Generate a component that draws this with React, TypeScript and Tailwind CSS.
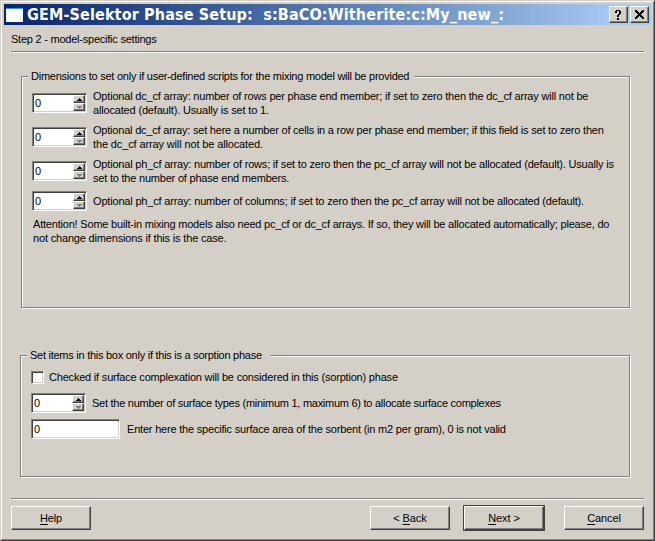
import type { ReactNode } from "react";

type Line = { text: string; tracking?: string };

function TextLines({ lines }: { lines: Line[] }) {
  return (
    <div className="flex flex-col items-start">
      {lines.map((l) => (
        <span key={l.text} className={`block h-[14px] whitespace-pre ${l.tracking ?? ""}`}>
          {l.text}
        </span>
      ))}
    </div>
  );
}

const sunken =
  "border border-t-[#808080] border-l-[#808080] border-r-white border-b-white bg-white shadow-[inset_1px_1px_0_#404040,inset_-1px_-1px_0_#d4d0c8]";
const raised =
  "border border-t-white border-l-white border-r-[#404040] border-b-[#404040] bg-[#d4d0c8] shadow-[inset_-1px_-1px_0_#808080]";

function SpinButton({ down }: { down?: boolean }) {
  return (
    <span className={`flex h-2 w-3 items-center justify-center ${raised}`}>
      <svg width="5" height="3" viewBox="0 0 5 3" shapeRendering="crispEdges" className={down ? "fill-[#808080]" : "fill-black"}>
        <path d={down ? "M0 0h5v1H0zM1 1h3v1H1zM2 2h1v1H2z" : "M2 0h1v1H2zM1 1h3v1H1zM0 2h5v1H0z"} />
      </svg>
    </span>
  );
}

function SpinBox() {
  return (
    <div className={`flex h-5 w-[55px] shrink-0 justify-between py-px pr-px pl-0.5 ${sunken}`}>
      <span className="h-4 leading-4">0</span>
      <div className="flex flex-col">
        <SpinButton />
        <SpinButton down />
      </div>
    </div>
  );
}

function Separator() {
  return <div className="mx-[9px] h-0.5 shrink-0 border-t border-[#808080] bg-white" />;
}

function Group({ title, titleClass, className, children }: { title: string; titleClass: string; className: string; children: ReactNode }) {
  return (
    <section
      className={`border border-[#808080] shadow-[1px_1px_0_#fff,inset_1px_1px_0_#fff] ${className}`}
    >
      <h2 className={`-mt-2 ml-1.5 h-[14px] bg-[#d4d0c8] pl-[3px] whitespace-pre ${titleClass}`}>{title}</h2>
      {children}
    </section>
  );
}

function Button({ hot, before, after, className }: { hot: string; before?: string; after: string; className?: string }) {
  return (
    <button className={`h-6 w-20 tracking-[-0.1px] whitespace-pre ${raised} ${className ?? ""}`}>
      {before}
      <span className="underline underline-offset-2">{hot}</span>
      {after}
    </button>
  );
}

const rows: Line[][] = [
  [
    { text: "Optional dc_cf array: number of rows per phase end member; if set to zero then the dc_cf array will not be", tracking: "tracking-[-0.19px]" },
    { text: "allocated (default). Usually is set to 1.", tracking: "tracking-[-0.17px]" },
  ],
  [
    { text: "Optional dc_cf array: set here a number of cells in a row per phase end member; if this field is set to zero then", tracking: "tracking-[-0.21px]" },
    { text: "the dc_cf array will not be allocated.", tracking: "tracking-[-0.13px]" },
  ],
  [
    { text: "Optional ph_cf array: number of rows; if set to zero then the pc_cf array will not be allocated (default). Usually is", tracking: "tracking-[-0.19px]" },
    { text: "set to the number of phase end members.", tracking: "tracking-[-0.21px]" },
  ],
  [{ text: "Optional ph_cf array: number of columns; if set to zero then the pc_cf array will not be allocated (default).", tracking: "tracking-[-0.18px]" }],
];

export default function App() {
  return (
    <div className="h-[541px] w-[655px] border border-t-[#d4d0c8] border-l-[#d4d0c8] border-r-[#404040] border-b-[#404040] bg-[#d4d0c8] font-['Liberation_Sans',Arial,sans-serif] text-[11px] leading-[14px] text-black">
      <div className="flex h-full flex-col border border-t-white border-l-white border-r-[#808080] border-b-[#808080]">
        <header className="mx-0.5 mt-0.5 flex h-[21px] shrink-0 items-center bg-linear-to-r from-[#0a246a] to-[#a6caf0] to-95% pr-0.5 pl-0.5">
          <span className="h-[14px] w-[17px] border-t border-[#3a95ff] bg-white" />
          <h1 className="ml-1 flex-1 font-['DejaVu_Sans_Condensed','DejaVu_Sans',sans-serif] text-[16px] leading-[21px] font-bold tracking-[0.14px] whitespace-pre text-white">
            GEM-Selektor Phase Setup:  s:BaCO:Witherite:c:My_new_:
          </h1>
          <button className={`flex h-[17px] w-[19px] items-center justify-center ${raised}`}>
            <svg width="7" height="10" viewBox="0 0 7 10" shapeRendering="crispEdges">
              <path d="M1 0h4v1H1zM0 1h2v2H0zM4 1h2v3H4zM3 4h2v1H3zM2 5h2v2H2zM2 8h2v2H2z" />
            </svg>
          </button>
          <button className={`ml-0.5 flex h-[17px] w-[19px] items-center justify-center ${raised}`}>
            <svg width="9" height="9" viewBox="0 0 9 9" shapeRendering="crispEdges">
              <path d="M0 0h2v1H0zM7 0h2v1H7zM0 1h3v1H0zM6 1h3v1H6zM1 2h3v1H1zM5 2h3v1H5zM2 3h5v1H2zM3 4h3v1H3zM2 5h5v1H2zM1 6h3v1H1zM5 6h3v1H5zM0 7h3v1H0zM6 7h3v1H6zM0 8h2v1H0zM7 8h2v1H7z" />
            </svg>
          </button>
        </header>
        <p className="mt-[7px] mb-[5px] ml-[9px] h-[14px] shrink-0 tracking-[-0.23px] whitespace-pre">Step 2 - model-specific settings</p>
        <Separator />
        <main className="flex min-h-0 flex-1 flex-col pt-[23px]">
          <Group
            className="ml-[19px] h-[232px] w-[609px]"
            title="Dimensions to set only if user-defined scripts for the mixing model will be provided"
            titleClass="w-[386px] tracking-[-0.25px]"
          >
            <div className="mt-1.5 ml-2.5 flex flex-col gap-1.5">
              {rows.map((lines, i) => (
                <div key={i} className="flex items-center gap-1.5">
                  <SpinBox />
                  <TextLines lines={lines} />
                </div>
              ))}
              <div className="ml-px">
                <TextLines
                  lines={[
                    { text: "Attention! Some built-in mixing models also need pc_cf or dc_cf arrays. If so, they will be allocated automatically; please, do", tracking: "tracking-[-0.2px]" },
                    { text: "not change dimensions if this is the case.", tracking: "tracking-[-0.17px]" },
                  ]}
                />
              </div>
            </div>
          </Group>
          <Group
            className="mt-[47px] ml-[18px] h-[122px] w-[610px]"
            title="Set items in this box only if this is a sorption phase"
            titleClass="w-[243px] tracking-[-0.26px]"
          >
            <div className="mt-2 ml-2.5 flex flex-col">
              <div className="flex h-[14px] items-center gap-[5px]">
                <span className={`mt-px size-[13px] ${sunken}`} />
                <TextLines lines={[{ text: "Checked if surface complexation will be considered in this (sorption) phase", tracking: "tracking-[-0.2px]" }]} />
              </div>
              <div className="mt-[9px] flex items-center gap-1.5">
                <SpinBox />
                <TextLines lines={[{ text: "Set the number of surface types (minimum 1, maximum 6) to allocate surface complexes", tracking: "tracking-[-0.265px]" }]} />
              </div>
              <div className="mt-1.5 flex items-center gap-[7px]">
                <div className={`h-5 w-[89px] pt-px pl-0.5 leading-4 ${sunken}`}>0</div>
                <TextLines lines={[{ text: "Enter here the specific surface area of the sorbent (in m2 per gram), 0 is not valid", tracking: "tracking-[-0.2px]" }]} />
              </div>
            </div>
          </Group>
        </main>
        <Separator />
        <footer className="flex h-[39px] shrink-0 items-center pr-[9px] pb-[3px] pl-[9px]">
          <Button hot="H" after="elp" />
          <Button className="ml-auto" before="< " hot="B" after="ack" />
          <div className="mr-[19px] ml-[13px] border border-[#404040]">
            <Button hot="N" after="ext >" />
          </div>
          <Button hot="C" after="ancel" />
        </footer>
      </div>
    </div>
  );
}
